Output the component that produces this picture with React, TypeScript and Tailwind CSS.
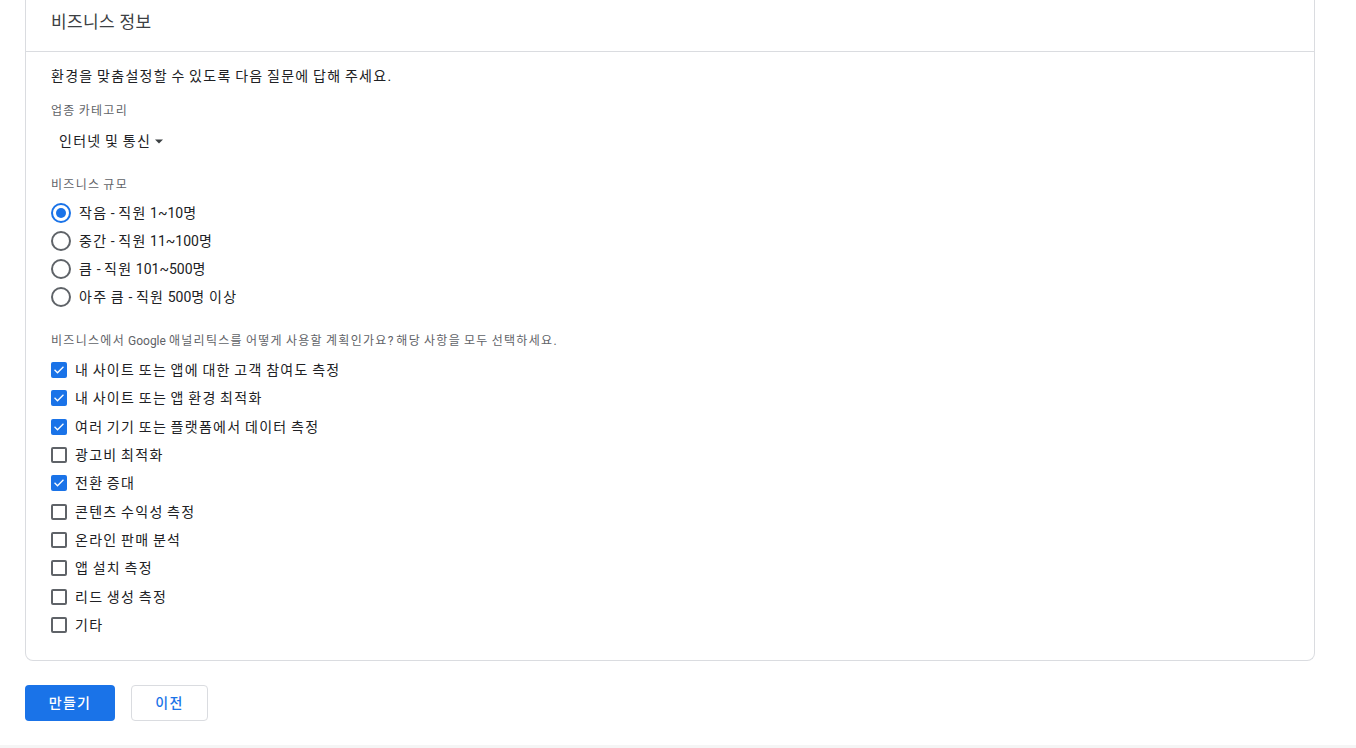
import React from "react";

const font = { fontFamily: 'Roboto, "Noto Sans CJK KR", sans-serif' };

function K({ t, wide }: { t: string; wide?: boolean }) {
  const parts = t.split(/([\uAC00-\uD7A3]+)/);
  return (
    <>
      {parts.map((p, i) =>
        /[\uAC00-\uD7A3]/.test(p) ? (
          <span key={i} className={wide ? "tracking-[0.4px]" : "tracking-[1.3px]"}>
            {p}
          </span>
        ) : (
          <span key={i}>{p}</span>
        )
      )}
    </>
  );
}

function Radio({ checked, label }: { checked: boolean; label: string }) {
  return (
    <div className="flex items-center h-[28px]">
      <div
        className={
          "w-[20px] h-[20px] rounded-full border-2 flex items-center justify-center " +
          (checked ? "border-[#1a73e8]" : "border-[#5f6368]")
        }
      >
        {checked && <div className="w-[10px] h-[10px] rounded-full bg-[#1a73e8]" />}
      </div>
      <span className="ml-[8px] text-[14px] leading-[20px] text-[#202124] whitespace-nowrap">
        <K t={label} />
      </span>
    </div>
  );
}

function Check({ checked, label }: { checked: boolean; label: string }) {
  return (
    <div className="flex items-center h-[28.33px]">
      {checked ? (
        <div className="w-[16px] h-[16px] rounded-[2px] bg-[#1a73e8] flex items-center justify-center">
          <svg width="12" height="12" viewBox="0 0 24 24" fill="none">
            <path d="M4 12.5l5 5L20 6.5" stroke="white" strokeWidth="2.6" strokeLinecap="square" />
          </svg>
        </div>
      ) : (
        <div className="w-[16px] h-[16px] rounded-[2px] border-2 border-[#5f6368]" />
      )}
      <span className="ml-[8px] text-[14px] leading-[20px] text-[#202124] whitespace-nowrap">
        <K t={label} />
      </span>
    </div>
  );
}

export default function App() {
  const checks: [boolean, string][] = [
    [true, "내 사이트 또는 앱에 대한 고객 참여도 측정"],
    [true, "내 사이트 또는 앱 환경 최적화"],
    [true, "여러 기기 또는 플랫폼에서 데이터 측정"],
    [false, "광고비 최적화"],
    [true, "전환 증대"],
    [false, "콘텐츠 수익성 측정"],
    [false, "온라인 판매 분석"],
    [false, "앱 설치 측정"],
    [false, "리드 생성 측정"],
    [false, "기타"],
  ];
  return (
    <div style={font} className="w-[1356px] h-[748px] bg-white flex flex-col overflow-hidden">
      <div className="flex-1 px-[25px]">
        <div className="w-[1290px] border-x border-b border-[#dadce0] rounded-b-[8px]">
          <div className="h-[52px] flex items-center pl-[25px] border-b border-[#dadce0]">
            <span className="text-[17px] leading-[24px] text-[#3c4043] -mt-[8px] whitespace-nowrap">
              <K t="비즈니스 정보" wide />
            </span>
          </div>
          <div className="pl-[25px] pb-[21px]">
            <p className="mt-[14px] text-[14px] leading-[20px] text-[#202124] whitespace-nowrap">
              <K t="환경을 맞춤설정할 수 있도록 다음 질문에 답해 주세요." />
            </p>
            <div className="mt-[17px] text-[12px] leading-[16px] text-[#5f6368] whitespace-nowrap">
              <K t="업종 카테고리" />
            </div>
            <div className="mt-[12px] pl-[8px] flex items-center text-[14px] leading-[20px] text-[#202124]">
              <span className="whitespace-nowrap">
                <K t="인터넷 및 통신" />
              </span>
              <svg className="ml-[3px]" width="10" height="10" viewBox="0 0 10 10">
                <path d="M1 3.5h8L5 7.5z" fill="#3c4043" />
              </svg>
            </div>
            <div className="mt-[26px] text-[12px] leading-[16px] text-[#5f6368] whitespace-nowrap">
              <K t="비즈니스 규모" />
            </div>
            <div className="mt-[6px]">
              <Radio checked label="작음 - 직원 1~10명" />
              <Radio checked={false} label="중간 - 직원 11~100명" />
              <Radio checked={false} label="큼 - 직원 101~500명" />
              <Radio checked={false} label="아주 큼 - 직원 500명 이상" />
            </div>
            <div className="mt-[22px] text-[12px] leading-[16px] text-[#5f6368] whitespace-nowrap">
              <K t="비즈니스에서 Google 애널리틱스를 어떻게 사용할 계획인가요? 해당 사항을 모두 선택하세요." />
            </div>
            <div className="mt-[7px]">
              {checks.map(([c, l]) => (
                <Check key={l} checked={c} label={l} />
              ))}
            </div>
          </div>
        </div>
        <div className="mt-[24px] flex gap-[16px]">
          <button className="w-[90px] h-[36px] rounded-[4px] bg-[#1a73e8] text-white text-[14px] font-medium">
            <K t="만들기" />
          </button>
          <button className="w-[77px] h-[36px] rounded-[4px] border border-[#dadce0] bg-white text-[#1a73e8] text-[14px] font-medium">
            <K t="이전" />
          </button>
        </div>
      </div>
      <div className="h-[3px] bg-[#f5f5f5]" />
    </div>
  );
}
